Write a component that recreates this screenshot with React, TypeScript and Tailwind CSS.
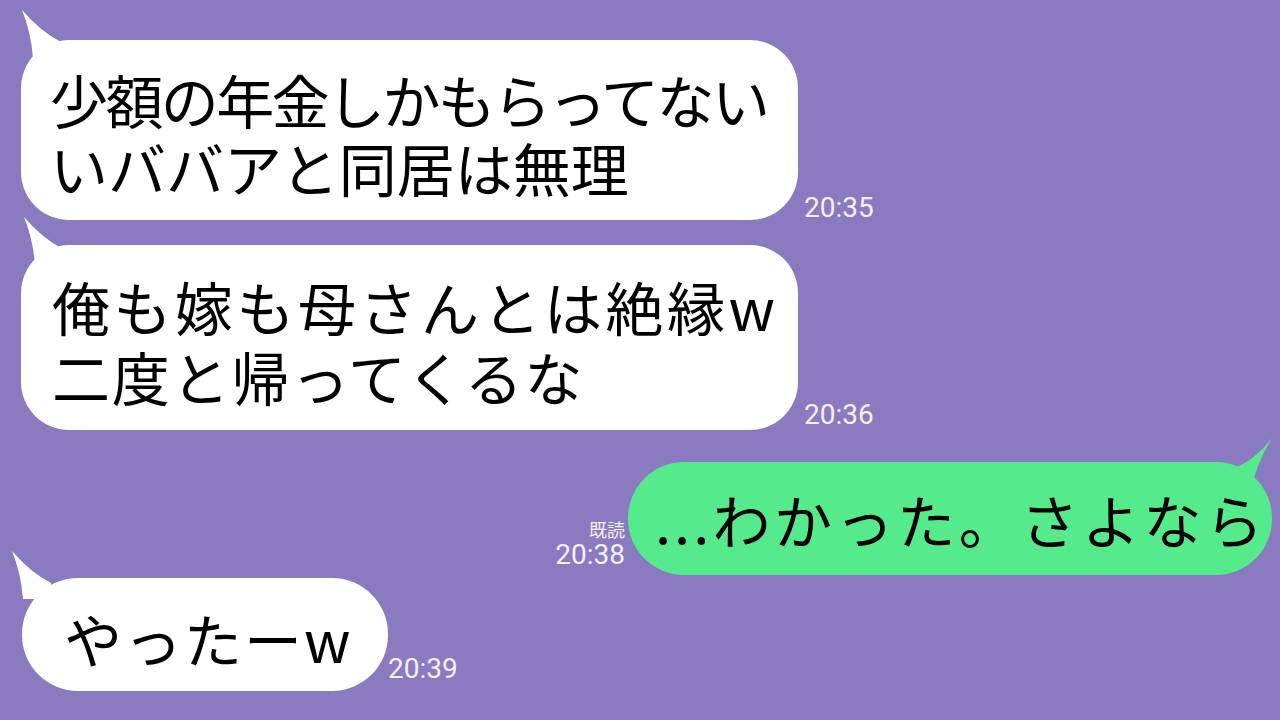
const jp = "font-['Noto_Sans_CJK_JP','Noto_Sans',sans-serif]";
const time = "font-['Roboto','Noto_Sans',sans-serif] text-[28px] leading-[28px] text-[#f3f0fa]";

const TailLeft = ({ className }: { className: string }) => (
    <svg className={`absolute ${className}`} width={50} height={50} viewBox="0 0 50 50">
        <path d="M1 2 Q20 24 40 34 L40 50 L12 50 Q10 24 1 2 Z" fill="#ffffff" />
    </svg>
);

const TailRight = () => (
    <svg className="absolute right-0 top-[-26px]" width={45} height={50} viewBox="0 0 45 50">
        <path d="M45 2 Q26 26 6 32 L15 50 L27 42 Q33 22 45 2 Z" fill="#55ea8b" />
    </svg>
);

const App = () => {
    return (
        <div className={`w-[1280px] h-[720px] overflow-hidden bg-[#8a7ac0] flex flex-col pt-[40px] ${jp}`}>
            {/* 1 */}
            <div className="flex items-end pl-[21px]">
                <div className="relative w-[777px] h-[180px] rounded-[48px] bg-white flex flex-col justify-center pl-[29px] pt-[6px]">
                    <TailLeft className="left-0 top-[-32px]" />
                    <p className="relative text-[58px] leading-[68px] text-black whitespace-nowrap">
                        <span className="block tracking-[-2.6px]">少額の年金しかもらってない</span>
                        <span className="block">いババアと同居は無理</span>
                    </p>
                </div>
                <span className={`${time} ml-[6px] mb-[-2px]`}>20:35</span>
            </div>

            {/* 2 */}
            <div className="flex items-end pl-[21px] mt-[25px]">
                <div className="relative w-[777px] h-[185px] rounded-[48px] bg-white flex flex-col justify-center pl-[31px] pt-[6px]">
                    <TailLeft className="left-[2px] top-[-30px]" />
                    <p className="relative text-[58px] leading-[70px] text-black whitespace-nowrap">
                        <span className="block tracking-[3.5px]">俺も嫁も母さんとは絶縁w</span>
                        <span className="block tracking-[1.8px]">二度と帰ってくるな</span>
                    </p>
                </div>
                <span className={`${time} ml-[6px] mb-[1px]`}>20:36</span>
            </div>

            {/* 3 */}
            <div className="flex items-end justify-end pr-[8px] mt-[32px]">
                <div className="flex flex-col items-end mr-[3px] mb-[6px]">
                    <span className="text-[18px] leading-[24px] text-[#f3f0fa]">既読</span>
                    <span className={time}>20:38</span>
                </div>
                <div className="relative w-[644px] h-[113px] rounded-[56px] bg-[#55ea8b] flex items-center pl-[27px]">
                    <TailRight />
                    <p className="relative text-[58px] leading-[68px] text-black whitespace-nowrap">
                        <span className="tracking-[3px]">...</span>
                        <span className="tracking-[3.6px]">わかった。さよなら</span>
                    </p>
                </div>
            </div>

            {/* 4 */}
            <div className="flex items-end pl-[22px] mt-[3px]">
                <div className="relative w-[366px] h-[113px] rounded-[56px] bg-white flex items-center pl-[42px] pt-[6px]">
                    <TailLeft className="left-[-11px] top-[-29px]" />
                    <p className="relative text-[58px] leading-[68px] text-black whitespace-nowrap tracking-[2px]">やったーw</p>
                </div>
                <span className={`${time} mb-[8px]`}>20:39</span>
            </div>
        </div>
    );
};

export default App;
